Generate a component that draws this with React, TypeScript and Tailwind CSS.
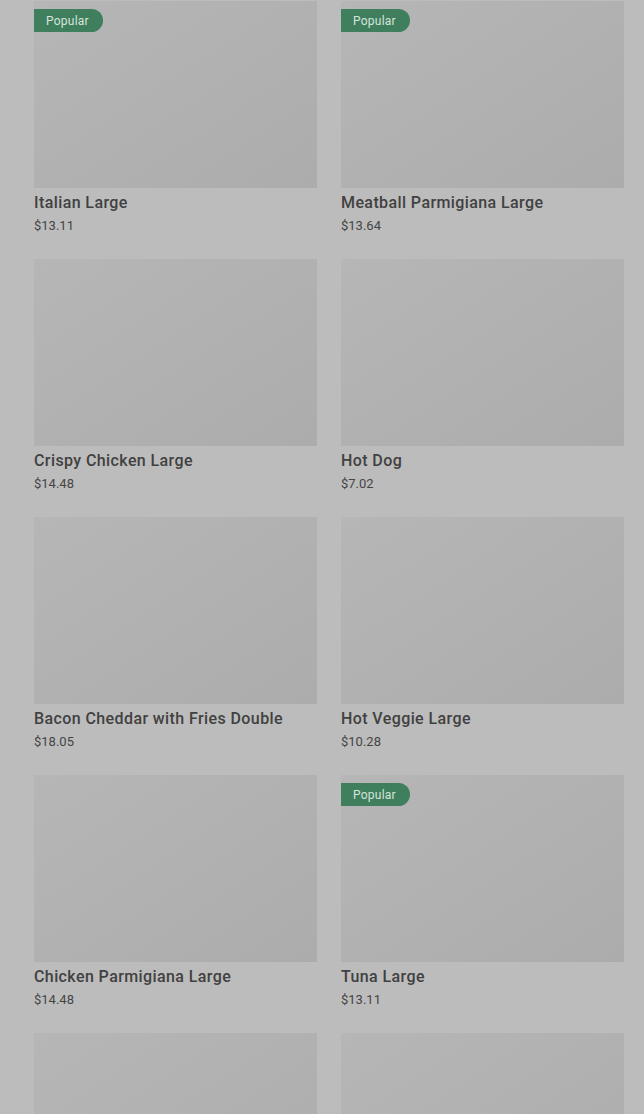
const items = [
  { name: "Italian Large", price: "$13.11", popular: true },
  { name: "Meatball Parmigiana Large", price: "$13.64", popular: true },
  { name: "Crispy Chicken Large", price: "$14.48", popular: false },
  { name: "Hot Dog", price: "$7.02", popular: false },
  { name: "Bacon Cheddar with Fries Double", price: "$18.05", popular: false },
  { name: "Hot Veggie Large", price: "$10.28", popular: false },
  { name: "Chicken Parmigiana Large", price: "$14.48", popular: false },
  { name: "Tuna Large", price: "$13.11", popular: true },
  { name: "Turkey Large", price: "$12.58", popular: false },
  { name: "Veggie Large", price: "$11.04", popular: false },
];

export default function App() {
  return (
    <div className="min-h-screen bg-[#bcbcbc] font-['Roboto',sans-serif]">
      <div className="grid grid-cols-2 gap-x-6 gap-y-[24px] pl-[34px] pr-[20px] pt-px">
        {items.map((item) => (
          <div key={item.name} className="flex flex-col">
            <div className="relative h-[187px] bg-linear-to-br from-[#b6b6b6] to-[#acacac]">
              {item.popular && (
                <span className="absolute left-0 top-2 flex h-[23px] items-center rounded-r-full bg-[#3f7f5e] pl-3 pr-[14px] text-[12px] tracking-[0.02em] text-[#d6e4dc]">
                  Popular
                </span>
              )}
            </div>
            <p className="mt-[4px] text-[16px] font-medium leading-[22px] tracking-[0.025em] text-[#414141]">
              {item.name}
            </p>
            <p className="mt-[3px] text-[13px] leading-[18px] text-[#454545]">{item.price}</p>
          </div>
        ))}
      </div>
    </div>
  );
}
